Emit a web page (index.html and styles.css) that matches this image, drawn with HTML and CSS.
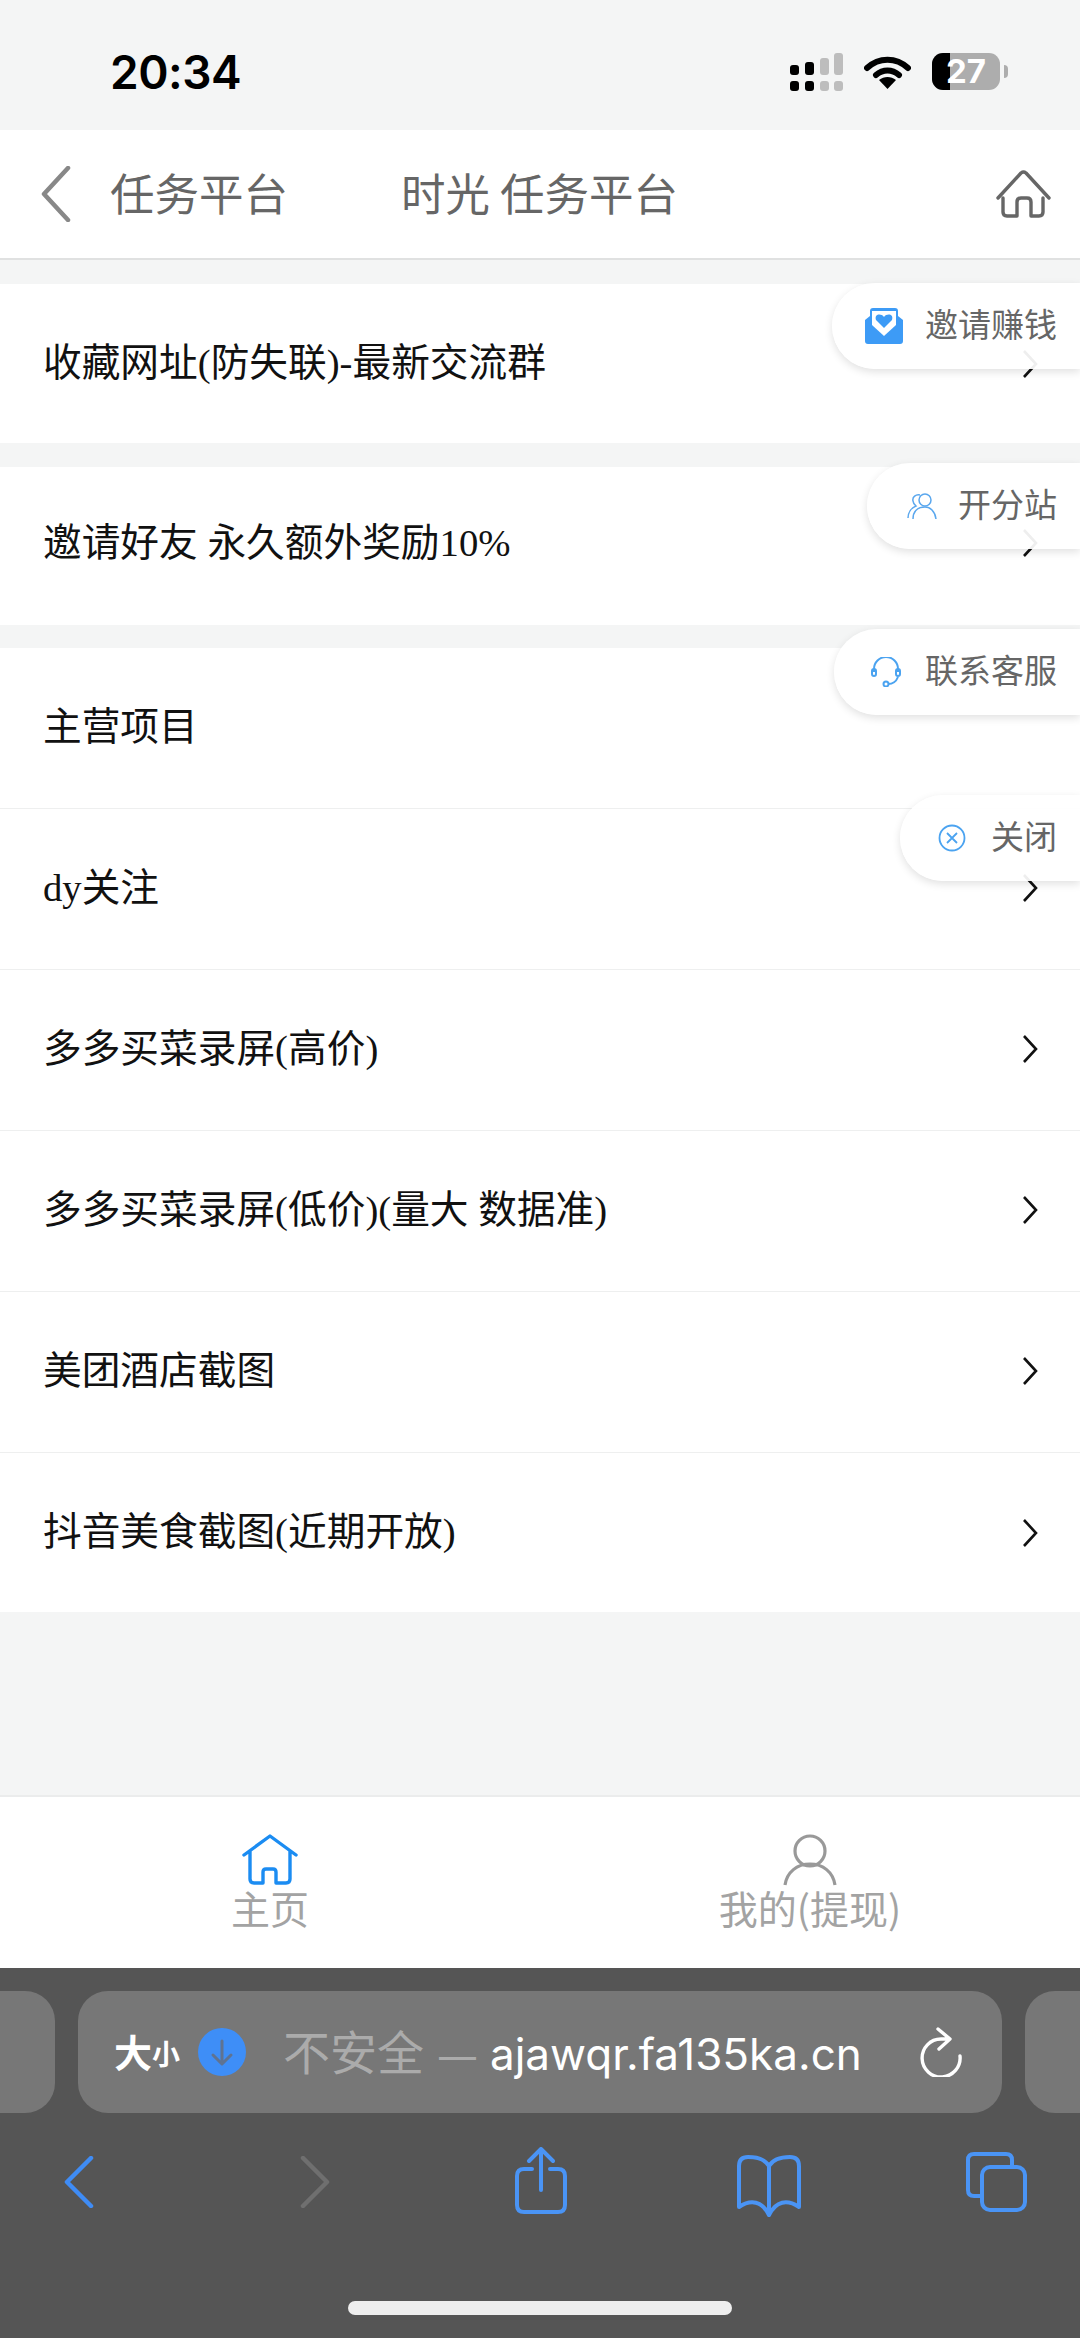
FILE: index.html
```html
<!DOCTYPE html>
<html lang="zh-CN">
<head>
<meta charset="utf-8">
<title>任务平台</title>
<link rel="stylesheet" href="styles.css">
</head>
<body>
<div class="screen">
  <div class="status">
    <span class="time">20:34</span>
    <div class="status-icons">
      <svg class="sig" width="53" height="38" viewBox="0 0 53 38">
        <g fill="#000"><rect x="0" y="12" width="9" height="10" rx="3"/><rect x="15" y="9" width="9" height="13" rx="3"/><rect x="0" y="28" width="9" height="10" rx="3"/><rect x="15" y="28" width="9" height="10" rx="3"/></g>
        <g fill="#bdbdbd"><rect x="30" y="5" width="9" height="17" rx="3"/><rect x="44" y="0" width="9" height="22" rx="3"/><rect x="30" y="28" width="9" height="10" rx="3"/><rect x="44" y="28" width="9" height="10" rx="3"/></g>
      </svg>
      <svg class="wifi" width="47" height="34" viewBox="0 0 47 34">
        <path d="M3 13 C15 2 32 2 44 13" fill="none" stroke="#000" stroke-width="6" stroke-linecap="round"/>
        <path d="M12 20 C19 14 28 14 35 20" fill="none" stroke="#000" stroke-width="6" stroke-linecap="round"/>
        <path d="M15 25 C20 21 27 21 32 25 L23.500 34 Z" fill="#000"/>
      </svg>
      <div class="battery">
        <div class="battery-fill"></div>
        <span class="battery-num">27</span>
        <div class="battery-nub"></div>
      </div>
    </div>
  </div>

  <header class="topbar">
    <svg class="top-back" width="30" height="56" viewBox="0 0 30 56"><path d="M27 2 L3 28 L27 54" fill="none" stroke="#888" stroke-width="4.500" stroke-linecap="round" stroke-linejoin="round"/></svg>
    <span class="top-sub">任务平台</span>
    <span class="top-title">时光 任务平台</span>
    <svg class="top-home" width="56" height="50" viewBox="0 0 56 50"><path d="M2 29 L25 4 Q27.500 2 30 4 L53 29 M7 29 V43 Q7 47 11 47 H21 V33 Q21 29 25 29 H31 Q35 29 35 33 V47 H43 Q47 47 47 43 V29" fill="none" stroke="#666" stroke-width="3.400" stroke-linecap="round" stroke-linejoin="round"/></svg>
  </header>

  <main class="content">
    <section class="group">
      <a class="row first">
        <span class="row-label">收藏网址(防失联)-最新交流群</span>
        <svg class="chev" width="16" height="30" viewBox="0 0 16 30"><path d="M2 2 L14 15 L2 28" fill="none" stroke="#111" stroke-width="2.600"/></svg>
      </a>
    </section>
    <section class="group">
      <a class="row second">
        <span class="row-label">邀请好友 永久额外奖励10%</span>
        <svg class="chev" width="16" height="30" viewBox="0 0 16 30"><path d="M2 2 L14 15 L2 28" fill="none" stroke="#111" stroke-width="2.600"/></svg>
      </a>
    </section>
    <section class="group group-main">
      <a class="row tall"><span class="row-label">主营项目</span></a>
      <a class="row tall"><span class="row-label">dy关注</span>
        <svg class="chev" width="16" height="30" viewBox="0 0 16 30"><path d="M2 2 L14 15 L2 28" fill="none" stroke="#111" stroke-width="2.600"/></svg></a>
      <a class="row tall"><span class="row-label">多多买菜录屏(高价)</span>
        <svg class="chev" width="16" height="30" viewBox="0 0 16 30"><path d="M2 2 L14 15 L2 28" fill="none" stroke="#111" stroke-width="2.600"/></svg></a>
      <a class="row tall"><span class="row-label">多多买菜录屏(低价)(量大 数据准)</span>
        <svg class="chev" width="16" height="30" viewBox="0 0 16 30"><path d="M2 2 L14 15 L2 28" fill="none" stroke="#111" stroke-width="2.600"/></svg></a>
      <a class="row tall"><span class="row-label">美团酒店截图</span>
        <svg class="chev" width="16" height="30" viewBox="0 0 16 30"><path d="M2 2 L14 15 L2 28" fill="none" stroke="#111" stroke-width="2.600"/></svg></a>
      <a class="row tall last"><span class="row-label">抖音美食截图(近期开放)</span>
        <svg class="chev" width="16" height="30" viewBox="0 0 16 30"><path d="M2 2 L14 15 L2 28" fill="none" stroke="#111" stroke-width="2.600"/></svg></a>
    </section>
  </main>

  <nav class="tabbar">
    <a class="tab">
      <svg width="56" height="52" viewBox="0 0 56 52"><path d="M2 21 L28 2 L54 21 M8 17 V45 Q8 49 12 49 H21 V38 Q21 35 24 35 H31 Q34 35 34 38 V49 H44 Q48 49 48 45 V17" fill="none" stroke="#1b8cf2" stroke-width="3.400" stroke-linecap="round" stroke-linejoin="round"/></svg>
      <span class="tab-label">主页</span>
    </a>
    <a class="tab">
      <svg width="54" height="52" viewBox="0 0 54 52"><circle cx="27" cy="17" r="15" fill="none" stroke="#999" stroke-width="3.200"/><path d="M2 51 C4 38 14 30 27 30 C40 30 50 38 52 51" fill="none" stroke="#999" stroke-width="3.200"/></svg>
      <span class="tab-label">我的(提现)</span>
    </a>
  </nav>

  <div class="browser">
    <div class="url-strip">
      <div class="side-pill left"></div>
      <div class="url-bar">
        <span class="aa"><span class="aa-big">大</span><span class="aa-small">小</span></span>
        <svg class="dl" width="48" height="48" viewBox="0 0 48 48"><circle cx="24" cy="24" r="24" fill="#3e8ef7"/><path d="M24 13 V35 M15 27 L24 36 L33 27" fill="none" stroke="#5f7391" stroke-width="3" stroke-linecap="round" stroke-linejoin="round"/></svg>
        <span class="url-text"><span class="insecure">不安全</span><span class="dash">—</span>ajawqr.fa135ka.cn</span>
        <svg class="reload" width="42" height="50" viewBox="0 0 42 50"><path d="M28 12 H21 A19 19 0 1 0 40 29 M18 2 L30 12 L19 22" fill="none" stroke="#fff" stroke-width="3.400" stroke-linecap="round" stroke-linejoin="round"/></svg>
      </div>
      <div class="side-pill right"></div>
    </div>
    <div class="toolbar">
      <svg class="tool t-back" width="30" height="52" viewBox="0 0 30 52"><path d="M27 2 L3 26 L27 50" fill="none" stroke="#3f8cf5" stroke-width="4.500" stroke-linecap="round" stroke-linejoin="round"/></svg>
      <svg class="tool t-fwd" width="30" height="52" viewBox="0 0 30 52"><path d="M3 2 L27 26 L3 50" fill="none" stroke="#6f6f6f" stroke-width="4.500" stroke-linecap="round" stroke-linejoin="round"/></svg>
      <svg class="tool t-share" width="52" height="68" viewBox="0 0 52 68"><path d="M17 22 H9 Q2 22 2 29 V58 Q2 65 9 65 H43 Q50 65 50 58 V29 Q50 22 43 22 H35 M26 43 V3 M14 14 L26 2 L38 14" fill="none" stroke="#4a94f5" stroke-width="4" stroke-linecap="round" stroke-linejoin="round"/></svg>
      <svg class="tool t-book" width="66" height="63" viewBox="0 0 66 63"><path d="M33 11 C29 4 20 2 12 2 Q3 2 3 11 V52 C15 44 26 46 33 60 M33 11 C37 4 46 2 54 2 Q63 2 63 11 V52 C51 44 40 46 33 60 M33 11 V60" fill="none" stroke="#4a94f5" stroke-width="4" stroke-linecap="round" stroke-linejoin="round"/></svg>
      <svg class="tool t-tabs" width="65" height="64" viewBox="0 0 65 64"><path d="M48 15 V10 Q48 4 42 4 H10 Q4 4 4 10 V40 Q4 46 10 46 H16" fill="none" stroke="#4a94f5" stroke-width="4"/><rect x="18" y="17" width="43" height="43" rx="8" fill="none" stroke="#4a94f5" stroke-width="4"/></svg>
    </div>
    <div class="home-bar"></div>
  </div>

  <aside class="floats">
    <a class="float f-invite">
      <svg class="fi" width="38" height="36" viewBox="0 0 38 36"><path d="M8 0 H30 Q33 0 33 3 V8 L38 12 V33 Q38 36 35 36 H3 Q0 36 0 33 V12 L5 8 V3 Q5 0 8 0 Z" fill="#3d9bf6"/><path d="M7 3 H31 V17 L19 28 L7 17 Z" fill="#fff"/><path d="M19 20 L11 12 C9 6 16 5 19 9 C22 5 29 6 27 12 Z" fill="#3d9bf6"/></svg>
      <span>邀请赚钱</span>
    </a>
    <a class="float f-site">
      <svg class="fi" width="30" height="26" viewBox="0 0 30 26"><g fill="none" stroke="#5aa7ee" stroke-width="1.500"><circle cx="18" cy="7" r="6"/><path d="M6 26 C6 18 11 14 18 14 C23 14 28 18 29 26"/><path d="M13 2 C9 1 5 4 6 8 C6 10 8 12 9 13 C4 15 1 20 1 25"/></g></svg>
      <span>开分站</span>
    </a>
    <a class="float f-help">
      <svg class="fi" width="30" height="30" viewBox="0 0 30 30"><g fill="none" stroke="#4ba3f0" stroke-width="2"><path d="M3 15 V12 A12 12 0 0 1 27 12 V15 M27 20 C25 25 21 27 17 27"/><rect x="1" y="12" width="4" height="7" rx="2"/><rect x="25" y="12" width="4" height="7" rx="2"/><circle cx="15" cy="27" r="2.500"/></g></svg>
      <span>联系客服</span>
    </a>
    <a class="float f-close">
      <svg class="fi" width="28" height="28" viewBox="0 0 28 28"><g fill="none" stroke="#4ba3f0" stroke-width="1.800"><circle cx="14" cy="14" r="12.500"/><path d="M9 9 L19 19 M19 9 L9 19"/></g></svg>
      <span>关闭</span>
    </a>
  </aside>
</div>
</body>
</html>
```

FILE: styles.css
```css
* { box-sizing: border-box; }
html, body { margin: 0; padding: 0; }
body { width: 1080px; height: 2338px; overflow: hidden; font-family: "Liberation Serif", "Noto Sans CJK SC", serif; }
a { color: inherit; text-decoration: none; }
svg { display: block; flex: none; }

.screen { position: relative; width: 1080px; height: 2338px; display: flex; flex-direction: column; background: #f4f5f5; }

.status { height: 130px; display: flex; align-items: flex-start; justify-content: space-between; padding: 0 80px 0 110px; flex: none; }
.time { font-family: Inter, sans-serif; font-weight: 600; font-size: 46px; line-height: 46px; margin-top: 49px; color: #000; letter-spacing: -0.5px; }
.status-icons { display: flex; align-items: flex-start; margin-top: 53px; }
.wifi { margin: 2px 21px 0 21px; }
.battery { position: relative; width: 68px; height: 37px; border-radius: 11px; background: #adadad; }
.battery-fill { position: absolute; left: 0; top: 0; bottom: 0; width: 18px; background: #000; border-radius: 11px 0 0 11px; }
.battery-num { position: absolute; left: 14px; top: 0; font-family: Inter, sans-serif; font-weight: 700; font-size: 33px; line-height: 37px; color: #fff; }
.battery-nub { position: absolute; right: -8px; top: 12px; width: 4px; height: 13px; border-radius: 0 4px 4px 0; background: #adadad; }

.topbar { height: 130px; flex: none; display: flex; align-items: center; padding: 0 28px 0 41px; background: #fff; border-bottom: 2px solid #e0e1e1; color: #666; font-family: "Noto Sans CJK SC", sans-serif; font-size: 44.500px; }
.top-sub { margin-left: 39px; padding-bottom: 6px; }
.top-title { margin-left: 113px; padding-bottom: 6px; }
.top-home { margin-left: auto; }

.content { flex: 1; padding-top: 24px; display: flex; flex-direction: column; gap: 24px; }
.group { background: #fff; }
.group-main { margin-top: -1px; }
.row { display: flex; align-items: center; justify-content: space-between; height: 159px; padding: 0 42px 2px 43px; font-size: 38.700px; color: #111; }
.row.first { padding-bottom: 0; }
.row.second { height: 158px; padding-bottom: 6px; }
.row.tall { height: 161px; border-bottom: 1px solid #eeefef; }
.row.last { height: 159px; padding-bottom: 0; border-bottom: none; }
.row-label { line-height: 1.2; }

.tabbar { height: 173px; flex: none; display: grid; grid-template-columns: 1fr 1fr; background: #fff; border-top: 2px solid #ebecec; padding-top: 37px; }
.tab { display: flex; flex-direction: column; align-items: center; }
.tab-label { font-family: "Noto Sans CJK SC", sans-serif; font-size: 39px; line-height: 44px; color: #a3a3a3; margin-top: -1px; }

.browser { position: relative; height: 370px; flex: none; background: #555; }
.url-strip { display: flex; gap: 23px; padding-top: 23px; }
.side-pill { width: 55px; height: 122px; background: #777; flex: none; }
.side-pill.left { border-radius: 0 30px 30px 0; }
.side-pill.right { border-radius: 30px 0 0 30px; }
.url-bar { width: 924px; height: 122px; background: #777; border-radius: 30px; flex: none; display: flex; align-items: center; padding: 0 40px 0 36px; color: #fff; }
.aa { display: flex; align-items: flex-end; font-family: "Noto Sans CJK SC", sans-serif; font-weight: 700; width: 68px; padding-bottom: 2px; }
.aa-big { font-size: 38px; line-height: 40px; }
.aa-small { font-size: 28px; line-height: 36px; }
.dl { margin-left: 16px; }
.url-text { margin-left: 37px; padding-bottom: 5px; font-family: Inter, "Noto Sans CJK SC", sans-serif; font-size: 44px; white-space: nowrap; }
.insecure { font-family: "Noto Sans CJK SC", sans-serif; font-size: 47px; color: #ababab; }
.dash { font-size: 37px; color: #ababab; margin: 0 14px 0 15px; }
.reload { margin-left: auto; }
.toolbar { display: flex; align-items: center; height: 70px; margin-top: 33px; }
.tool { flex: none; }
.t-back { margin-left: 64px; margin-top: 2px; }
.t-fwd { margin-left: 206px; margin-top: 2px; }
.t-share { margin-left: 185px; }
.t-book { margin-left: 169px; margin-top: 10px; }
.t-tabs { margin-left: 162px; margin-top: 2px; }
.home-bar { position: absolute; left: 348px; top: 333px; width: 384px; height: 14px; border-radius: 7px; background: #eee; }

.floats { position: absolute; top: 283px; right: 0; display: flex; flex-direction: column; align-items: flex-end; }
.float { height: 86px; display: flex; align-items: center; justify-content: flex-end; padding-right: 23px; background: rgba(255,255,255,.93); border-radius: 43px 0 0 43px; box-shadow: 0 3px 8px rgba(0,0,0,.12); color: #666; font-family: "Noto Sans CJK SC", sans-serif; font-size: 33px; }
.float span { padding-bottom: 6px; }
.f-invite { width: 248px; }
.f-site { width: 213px; margin-top: 94px; }
.f-help { width: 246px; margin-top: 80px; }
.f-close { width: 180px; margin-top: 80px; }
.f-invite .fi { margin-right: 22px; }
.f-site .fi { margin-right: 21px; }
.f-help .fi { margin-right: 24px; }
.f-close .fi { margin-right: 25px; }
```
